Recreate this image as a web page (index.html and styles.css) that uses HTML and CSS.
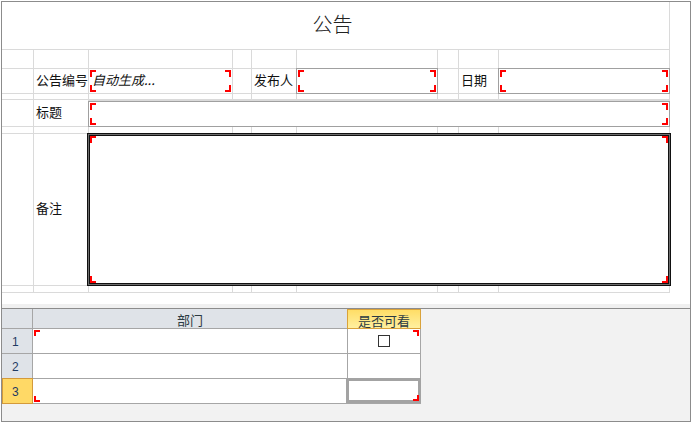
FILE: index.html
```html
<!DOCTYPE html>
<html>
  <head>
    <meta charset="utf-8">
    <link rel="stylesheet" href="styles.css">
  </head>
  <body>
    <div class="frame">
      <div class="sheet">
        <div class="grid">
          <!-- title row -->
          <div class="title">公告</div>

          <div></div><div></div><div></div><div></div><div></div><div></div><div></div><div></div><div></div>

          <!-- number / author / date -->
          <div></div>
          <div class="lbl">公告编号</div>
          <div class="fld ro">
            <span class="mk tl"></span><span class="mk bl"></span>
            <span class="mk tr"></span><span class="mk br"></span>
            <span class="auto">自动生成...</span>
          </div>
          <div></div>
          <div class="lbl">发布人</div>
          <div class="fld">
            <span class="mk tl"></span><span class="mk bl"></span>
            <span class="mk tr"></span><span class="mk br"></span>
          </div>
          <div></div>
          <div class="lbl">日期</div>
          <div class="fld">
            <span class="mk tl"></span><span class="mk bl"></span>
            <span class="mk tr"></span><span class="mk br"></span>
          </div>

          <div></div><div></div><div></div><div></div><div></div><div></div><div></div><div></div><div></div>

          <!-- subject -->
          <div></div>
          <div class="lbl">标题</div>
          <div class="fld wide">
            <span class="mk tl"></span><span class="mk bl"></span>
            <span class="mk tr"></span><span class="mk br"></span>
          </div>

          <div></div><div></div><div></div><div></div><div></div><div></div><div></div><div></div><div></div>

          <!-- remark -->
          <div></div>
          <div class="lbl">备注</div>
          <div class="memo">
            <span class="mk tl"></span><span class="mk bl"></span>
            <span class="mk tr"></span><span class="mk br"></span>
          </div>

          <div></div><div></div><div></div><div></div><div></div><div></div><div></div><div></div><div></div>
        </div>
      </div>
      <div class="band"></div>
      <div class="lower">
        <div class="tbl">
          <div class="rh"></div>
          <div class="hd">部门</div>
          <div class="hd hot">是否可看</div>

          <div class="rh">1</div>
          <div class="cell"><span class="mk sm tl"></span></div>
          <div class="cell chk"><span class="box"></span><span class="mk sm tr"></span></div>

          <div class="rh">2</div>
          <div class="cell"></div>
          <div class="cell"></div>

          <div class="rh on">3</div>
          <div class="cell"><span class="mk sm bl"></span></div>
          <div class="cell cur"><span class="mk sm br"></span></div>
        </div>
      </div>
    </div>
  </body>
</html>
```

FILE: styles.css
```css
body {
  margin: 0;
  font-family: "Noto Sans CJK SC", "Liberation Sans", sans-serif;
  font-size: 13px;
  color: #111;
  background-color: #fff;
}

.frame {
  box-sizing: border-box;
  width: 690px;
  height: 421px;
  margin: 1px 0 0 1px;
  border: 1px solid #8c8c8c;
  display: flex;
  flex-direction: column;
}

.sheet {
  height: 302px;
  background-color: #fff;
}

.grid {
  display: grid;
  grid-template-columns: 31px 54px 143px 18px 44px 140px 20px 39px 170px;
  grid-template-rows: 47px 18px 24px 5px 26px 6px 151px 6px;
  gap: 1px;
  padding: 0 1px 1px 0;
  width: fit-content;
  background-color: #dadada;
}

.grid > div {
  background-color: #fff;
}

.title {
  grid-column: span 9;
  display: flex;
  align-items: center;
  justify-content: center;
  padding: 0 6px 4px 0;
  font-size: 20px;
  font-weight: 300;
  color: #222;
}

.lbl {
  display: flex;
  align-items: center;
  padding: 0 0 4px 2px;
  white-space: nowrap;
}

.fld {
  position: relative;
  margin: -1px;
  border: 1px solid #a0a0a0;
}

.fld.ro {
  margin: 0;
  border: none;
  display: flex;
  align-items: center;
  padding-bottom: 4px;
}

.fld.wide {
  grid-column: span 7;
  margin: 1px -1px -1px -1px;
}

.auto {
  padding-left: 3px;
  font-style: italic;
  color: #111;
}

.memo {
  grid-column: span 7;
  position: relative;
  margin: -1px -2px;
  border: 1px solid #111;
  box-shadow: inset 0 0 0 1px #6e6e6e, inset 0 0 0 2px #111;
}

/* red corner brackets */
.mk {
  position: absolute;
  box-sizing: border-box;
  width: 6px;
  height: 7px;
  border: 0 solid #f00;
}

.mk.sm {
  height: 6px;
}

.tl { top: 1px; left: 1px; border-top-width: 2px; border-left-width: 2px; }
.tr { top: 1px; right: 1px; border-top-width: 2px; border-right-width: 2px; }
.bl { bottom: 1px; left: 1px; border-bottom-width: 2px; border-left-width: 2px; }
.br { bottom: 1px; right: 1px; border-bottom-width: 2px; border-right-width: 2px; }

.memo .tl { top: 2px; left: 2px; }
.memo .tr { top: 2px; right: 2px; }
.memo .bl { bottom: 2px; left: 2px; }
.memo .br { bottom: 2px; right: 2px; }

.band {
  height: 4px;
  background-color: #f0f0f0;
}

.lower {
  flex: 1;
  border-top: 1px solid #8c8c8c;
  background-color: #f2f2f2;
}

.tbl {
  display: grid;
  grid-template-columns: 30px 314px 72px;
  grid-template-rows: 19px 24px 24px 24px;
  gap: 1px;
  padding: 0 1px 1px 0;
  width: fit-content;
  background-color: #a6a6a6;
}

.tbl > div {
  position: relative;
  background-color: #fff;
}

.tbl > .rh {
  display: flex;
  align-items: center;
  padding: 1px 0 0 10px;
  font-family: "Liberation Sans", sans-serif;
  font-size: 12px;
  color: #1f3b63;
  background-color: #dfe3e8;
}

.tbl > .rh.on {
  margin: -1px -1px -1px 0;
  border: 1px solid #d49a3a;
  padding-left: 9px;
  background-color: #ffd966;
}

.tbl > .hd {
  display: flex;
  align-items: center;
  justify-content: center;
  padding-top: 2px;
  color: #2b3a42;
  background-color: #dfe3e8;
}

.tbl > .hd.hot {
  margin: 0 -1px -1px -1px;
  border: 1px solid #d9a23a;
  background: linear-gradient(#ffdd66, #fff0a0);
}

.chk {
  display: flex;
  align-items: center;
  justify-content: center;
}

.box {
  box-sizing: border-box;
  width: 12px;
  height: 12px;
  border: 1px solid #333;
}

.tbl > .cur {
  margin: -1px -1px 0 -2px;
  border: 3px solid #a3a3a3;
}

.cur .br {
  right: -1px;
  bottom: -1px;
}
```
